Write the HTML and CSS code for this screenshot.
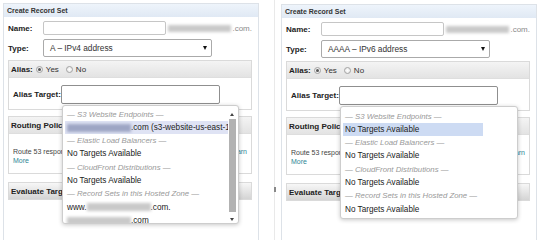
FILE: index.html
```html
<!DOCTYPE html>
<html lang="en">
<head>
  <meta charset="UTF-8" />
  <title>Create Record Set</title>
  <link rel="stylesheet" href="styles.css">
</head>
<body>
  <div class="page">

    <!-- left: A record -->
    <div class="panel">
      <div class="panel-head">Create Record Set</div>
      <div class="panel-body">
        <div class="row row-name">
          <span class="label">Name:</span>
          <span class="input input-name"></span>
          <span class="blur blur-zone"></span>
          <span class="suffix">.com.</span>
        </div>
        <div class="row row-type">
          <span class="label">Type:</span>
          <span class="select">A – IPv4 address<span class="caret"></span></span>
        </div>
        <div class="box alias">
          <div class="box-head">
            <span class="label">Alias:</span>
            <span class="choice"><span class="radio radio-on"></span>Yes</span>
            <span class="choice choice-no"><span class="radio"></span>No</span>
          </div>
          <div class="alias-body">
            <span class="label label-target">Alias Target:</span>
            <div class="target">
              <span class="input input-target"></span>
              <div class="menu">
                <div class="opts">
                  <div class="opt opt-group">— S3 Website Endpoints —</div>
                  <div class="opt opt-hl"><span class="blur blur-item blur-hl"></span>.com (s3-website-us-east-1)</div>
                  <div class="opt opt-group">— Elastic Load Balancers —</div>
                  <div class="opt">No Targets Available</div>
                  <div class="opt opt-group">— CloudFront Distributions —</div>
                  <div class="opt">No Targets Available</div>
                  <div class="opt opt-group">— Record Sets in this Hosted Zone —</div>
                  <div class="opt">www.<span class="blur blur-item"></span>.com.</div>
                  <div class="opt"><span class="blur blur-item"></span>.com</div>
                </div>
                <div class="scroll">
                  <span class="arrow-up"></span>
                  <span class="thumb"></span>
                  <span class="arrow-down"></span>
                </div>
              </div>
            </div>
          </div>
        </div>
        <div class="box routing">
          <div class="box-head"><span class="label">Routing Policy</span></div>
          <div class="routing-body">
            <div class="line"><span class="line-text">Route 53 responds to queries based only on the values in this record.</span><a class="link">Learn</a></div>
            <a class="link">More</a>
          </div>
        </div>
        <div class="box evaluate">
          <div class="box-head box-head-dark"><span class="label">Evaluate Target Health</span></div>
        </div>
      </div>
    </div>

    <div class="divider"><span class="grip"></span></div>

    <!-- right: AAAA record -->
    <div class="panel panel-right">
      <div class="panel-head">Create Record Set</div>
      <div class="panel-body">
        <div class="row row-name">
          <span class="label">Name:</span>
          <span class="input input-name"></span>
          <span class="blur blur-zone"></span>
          <span class="suffix">.com.</span>
        </div>
        <div class="row row-type">
          <span class="label">Type:</span>
          <span class="select">AAAA – IPv6 address<span class="caret"></span></span>
        </div>
        <div class="box alias">
          <div class="box-head">
            <span class="label">Alias:</span>
            <span class="choice"><span class="radio radio-on"></span>Yes</span>
            <span class="choice choice-no"><span class="radio"></span>No</span>
          </div>
          <div class="alias-body">
            <span class="label label-target">Alias Target:</span>
            <div class="target">
              <span class="input input-target"></span>
              <div class="menu menu-short">
                <div class="opts">
                  <div class="opt opt-group">— S3 Website Endpoints —</div>
                  <div class="opt opt-hl opt-hl-short">No Targets Available</div>
                  <div class="opt opt-group">— Elastic Load Balancers —</div>
                  <div class="opt">No Targets Available</div>
                  <div class="opt opt-group">— CloudFront Distributions —</div>
                  <div class="opt">No Targets Available</div>
                  <div class="opt opt-group">— Record Sets in this Hosted Zone —</div>
                  <div class="opt">No Targets Available</div>
                </div>
              </div>
            </div>
          </div>
        </div>
        <div class="box routing">
          <div class="box-head"><span class="label">Routing Policy</span></div>
          <div class="routing-body">
            <div class="line"><span class="line-text">Route 53 responds to queries based only on the values in this record.</span><a class="link">Learn</a></div>
            <a class="link">More</a>
          </div>
        </div>
        <div class="box evaluate">
          <div class="box-head box-head-dark"><span class="label">Evaluate Target Health</span></div>
        </div>
      </div>
    </div>

  </div>
</body>
</html>
```

FILE: styles.css
```css
body {
  margin: 0;
  background-color: #fff;
  color: #222;
  font-family: "Liberation Sans", Arial, sans-serif;
}
.page {
  display: flex;
  align-items: flex-start;
  padding-left: 3px;
  height: 240px;
  overflow: hidden;
}
.panel {
  flex: none;
  width: 256px;
  height: 240px;
  margin-top: 3px;
  box-sizing: border-box;
  border: 1px solid #dde2e8;
  border-bottom: 0;
}
.panel-right {
  margin-top: 4px;
}
.divider {
  flex: none;
  display: flex;
  flex-direction: column;
  align-items: center;
  width: 1px;
  height: 240px;
  margin: 0 6px 0 15px;
  background-color: #e9e9e9;
}
.grip {
  width: 2px;
  height: 5px;
  margin-top: 187px;
  background-color: #888;
}
.panel-head {
  height: 13px;
  line-height: 13px;
  padding-left: 3px;
  font-size: 7px;
  font-weight: bold;
  color: #333;
  background: linear-gradient(#eef4fb, #e0e9f4);
}
.panel-body {
  padding: 0 6px 0 4px;
}
.label {
  font-size: 8px;
  font-weight: bold;
  color: #222;
  white-space: nowrap;
}
.row {
  display: flex;
  align-items: center;
}
.row .label {
  flex: none;
  width: 35px;
}
.row-name {
  margin-top: 4px;
  height: 14px;
}
.row-type {
  margin-top: 4px;
  height: 18px;
}
.input {
  display: block;
  flex: none;
  box-sizing: border-box;
  border: 1px solid #c6c6c6;
  border-radius: 2px;
  background-color: #fff;
}
.input-name {
  width: 123px;
  height: 14px;
}
.blur {
  display: inline-block;
  background-color: #c9c9c9;
  filter: blur(1.5px);
}
.blur-zone {
  width: 64px;
  height: 7px;
  margin-left: 2px;
}
.suffix {
  margin-left: 1px;
  font-size: 8px;
  color: #8a8a8a;
}
.select {
  position: relative;
  display: block;
  box-sizing: border-box;
  width: 169px;
  height: 18px;
  padding-left: 6px;
  border: 1px solid #aaa;
  border-radius: 2px;
  font-size: 8.3px;
  line-height: 16px;
  color: #333;
  background-color: #fff;
}
.caret {
  position: absolute;
  right: 4px;
  top: 6px;
  border-left: 2px solid transparent;
  border-right: 2px solid transparent;
  border-top: 4px solid #111;
}
.box {
  border: 1px solid #dadada;
}
.box-head {
  display: flex;
  align-items: center;
  height: 16px;
  padding-left: 2px;
  background: linear-gradient(#f4f4f4, #e3e3e3);
  border-bottom: 1px solid #dedede;
}
.box-head-dark {
  background: linear-gradient(#f7f7f7, #d4d4d4);
  border-bottom: 0;
}
.alias {
  margin-top: 3px;
}
.choice {
  display: flex;
  align-items: center;
  margin-left: 3px;
  font-size: 8px;
  color: #333;
}
.choice-no {
  margin-left: 7px;
}
.radio {
  display: flex;
  align-items: center;
  justify-content: center;
  width: 7px;
  height: 7px;
  margin-right: 3px;
  box-sizing: border-box;
  border: 1px solid #a3a3a3;
  border-radius: 50%;
  background: radial-gradient(#fff, #e2e2e2);
}
.radio-on::after {
  content: "";
  width: 3px;
  height: 3px;
  border-radius: 50%;
  background-color: #555;
}
.alias-body {
  display: flex;
  align-items: center;
  padding: 7px 0 5px 4px;
}
.label-target {
  width: 48px;
}
.target {
  position: relative;
}
.input-target {
  width: 159px;
  height: 19px;
  border-color: #8f8f8f;
}
.menu {
  position: absolute;
  left: 1px;
  top: 20px;
  z-index: 2;
  display: flex;
  width: 177px;
  height: 119px;
  padding: 1.5px 2px 0 2px;
  box-sizing: border-box;
  border: 1px solid #cdcdcd;
  border-radius: 3px;
  background-color: #fff;
  box-shadow: 0 1px 4px rgba(0, 0, 0, 0.22);
  overflow: hidden;
}
.menu-short {
  width: 178px;
  height: 113px;
  padding-top: 2.5px;
}
.opts {
  flex: 1;
  min-width: 0;
}
.opt {
  height: 13.3px;
  line-height: 13.3px;
  padding-left: 2px;
  font-size: 8.2px;
  color: #222;
  white-space: nowrap;
  overflow: hidden;
}
.opt-group {
  font-size: 7.8px;
  font-style: italic;
  color: #999;
}
.opt-hl {
  background-color: #dfe3f4;
}
.opt-hl-short {
  margin-right: 32px;
  background-color: #cddbf3;
}
.blur-item {
  width: 64px;
  height: 8px;
  vertical-align: middle;
}
.blur-hl {
  background-color: #9ea6c4;
}
.scroll {
  flex: none;
  display: flex;
  flex-direction: column;
  align-items: center;
  width: 8px;
  padding-top: 5px;
}
.arrow-up {
  border-left: 2px solid transparent;
  border-right: 2px solid transparent;
  border-bottom: 3px solid #444;
}
.thumb {
  width: 7px;
  height: 93px;
  margin-top: 3px;
  background-color: #b2b2b2;
}
.arrow-down {
  margin-top: 6px;
  border-left: 2px solid transparent;
  border-right: 2px solid transparent;
  border-top: 3px solid #444;
}
.routing {
  margin-top: 6px;
}
.routing-body {
  padding: 13px 4px 8px 4px;
  font-size: 7px;
  line-height: 9px;
  color: #444;
}
.line {
  display: flex;
}
.line-text {
  flex: 1;
  min-width: 0;
  white-space: nowrap;
  overflow: hidden;
}
.link {
  color: #2f8796;
}
.evaluate {
  margin-top: 8px;
}
```
